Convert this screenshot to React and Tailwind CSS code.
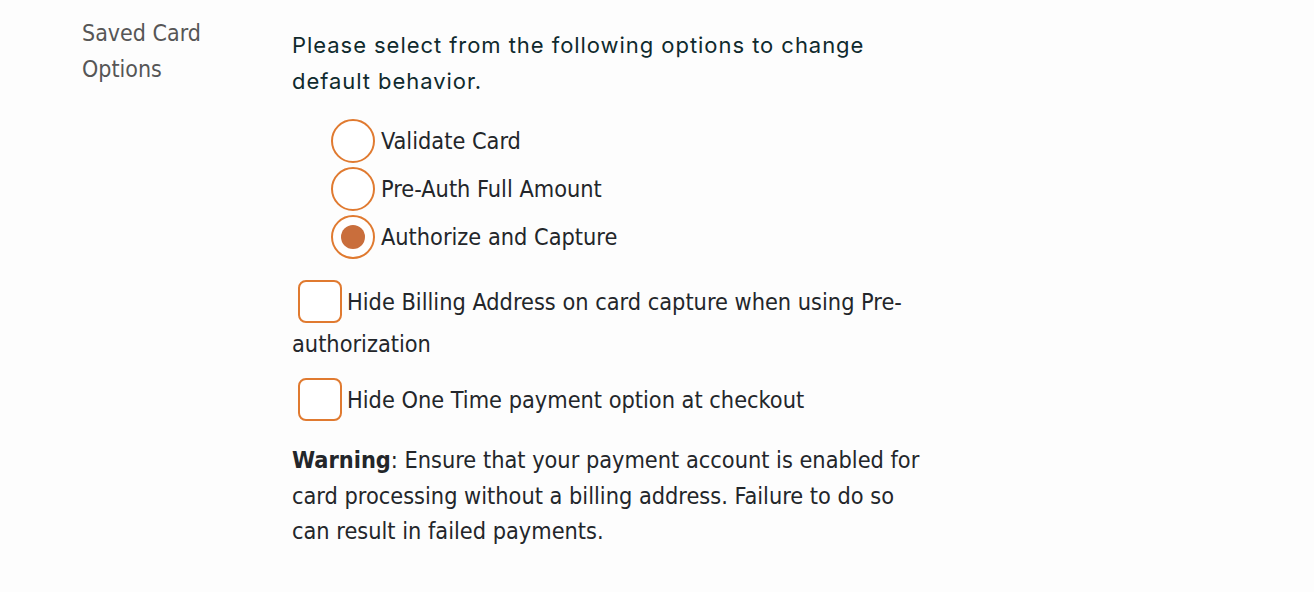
import React, { useState } from "react";

const body = "font-['DejaVu_Sans_Condensed','Liberation_Sans',sans-serif]";

function Radio({ checked, label, onClick }) {
  return (
    <label className="flex items-center h-12 cursor-pointer" onClick={onClick}>
      <span className="w-[44px] h-[44px] rounded-full border-2 border-[#e07a30] bg-white flex items-center justify-center shrink-0">
        {checked && <span className="w-6 h-6 rounded-full bg-[#c96e3c]" />}
      </span>
      <span className="ml-[6px] text-[23.3px] text-[#23262a]">{label}</span>
    </label>
  );
}

function Box({ checked, onClick }) {
  return (
    <span
      onClick={onClick}
      className="inline-block align-middle w-[44px] h-[43px] rounded-[8px] border-2 border-[#e07a30] bg-white mr-[5px] ml-[6px] -mt-[4px] cursor-pointer"
    >
      {checked && <span className="block text-center text-[#c96e3c]">✓</span>}
    </span>
  );
}

export default function App() {
  const [mode, setMode] = useState("capture");
  const [hideBilling, setHideBilling] = useState(false);
  const [hideOneTime, setHideOneTime] = useState(false);

  const options = [
    { id: "validate", label: "Validate Card" },
    { id: "preauth", label: "Pre-Auth Full Amount" },
    { id: "capture", label: "Authorize and Capture" },
  ];

  return (
    <div className={`w-full min-h-[592px] bg-[#fdfdfd] ${body}`}>
      <div className="flex pt-[15px] pl-[82px]">
        <div className="w-[130px] mr-[80px] text-[23px] leading-[36px] text-[#565656] shrink-0">
          Saved Card Options
        </div>
        <div className="w-[660px] pt-[12px]">
          <p className="font-['Inter',sans-serif] text-[22px] tracking-[0.95px] leading-[36px] text-[#0f2a2d] w-[600px]">
            Please select from the following options to change default behavior.
          </p>
          <div className="mt-[18px] ml-[39px]">
            {options.map((o) => (
              <Radio
                key={o.id}
                label={o.label}
                checked={mode === o.id}
                onClick={() => setMode(o.id)}
              />
            ))}
          </div>
          <p className="mt-[20px] w-[640px] text-[23.3px] leading-[42px] text-[#23262a]">
            <Box checked={hideBilling} onClick={() => setHideBilling(!hideBilling)} />
            Hide Billing Address on card capture when using Pre-authorization
          </p>
          <p className="mt-[14px] text-[23.3px] leading-[42px] text-[#23262a]">
            <Box checked={hideOneTime} onClick={() => setHideOneTime(!hideOneTime)} />
            Hide One Time payment option at checkout
          </p>
          <p className="mt-[21px] w-[645px] text-[23.3px] leading-[35.5px] text-[#23262a]">
            <b className="font-bold">Warning</b>: Ensure that your payment account is enabled for
            card processing without a billing address. Failure to do so can result in failed payments.
          </p>
        </div>
      </div>
    </div>
  );
}
